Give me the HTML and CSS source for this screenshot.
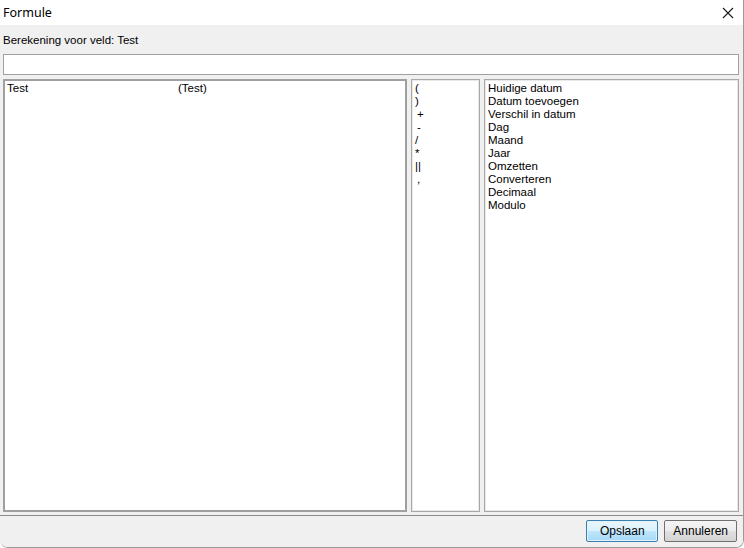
FILE: index.html
```html
<!DOCTYPE html>
<html lang="nl">
<head>
    <meta charset="UTF-8">
    <title>Formule</title>
    <link rel="stylesheet" href="styles.css">
</head>
<body>
    <div class="window">
        <div class="titlebar">
            <span class="title">Formule</span>
            <svg class="close" width="12" height="12" viewBox="0 0 12 12">
                <path d="M1 1 L11 11 M11 1 L1 11" stroke="#1a1a1a" stroke-width="1.1" fill="none"/>
            </svg>
        </div>
        <div class="client">
            <div class="field-label">Berekening voor veld: Test</div>
            <input class="formula-input" type="text">
            <div class="panels">
                <div class="list fields">
                    <div class="field-row"><span class="field-name">Test</span><span>(Test)</span></div>
                </div>
                <div class="list operators">
                    <div>(</div>
                    <div>)</div>
                    <div class="ind">+</div>
                    <div class="ind">-</div>
                    <div>/</div>
                    <div>*</div>
                    <div>||</div>
                    <div class="ind">,</div>
                </div>
                <div class="list functions">
                    <div>Huidige datum</div>
                    <div>Datum toevoegen</div>
                    <div>Verschil in datum</div>
                    <div>Dag</div>
                    <div>Maand</div>
                    <div>Jaar</div>
                    <div>Omzetten</div>
                    <div>Converteren</div>
                    <div>Decimaal</div>
                    <div>Modulo</div>
                </div>
            </div>
            <div class="footer">
                <button class="btn default">Opslaan</button>
                <button class="btn">Annuleren</button>
            </div>
        </div>
    </div>
</body>
</html>
```

FILE: styles.css
```css
html, body {
    margin: 0;
    padding: 0;
    background: #ffffff;
}
.window {
    width: 744px;
    height: 548px;
    box-sizing: border-box;
    border-right: 1px solid #9a9a9a;
    border-bottom: 1px solid #9a9a9a;
    border-radius: 6px 0 8px 8px;
    overflow: hidden;
    display: flex;
    flex-direction: column;
    font-family: "Liberation Sans", Arial, sans-serif;
    font-size: 11.5px;
    color: #000;
}
.titlebar {
    height: 25px;
    background: #ffffff;
    display: flex;
    align-items: center;
    justify-content: space-between;
    padding: 0 9px 0 3px;
    flex-shrink: 0;
}
.title {
    font-family: "Noto Sans", sans-serif;
    font-size: 12.5px;
    color: #000;
}
.close {
    display: block;
}
.client {
    flex: 1;
    background: #f0f0f0;
    display: flex;
    flex-direction: column;
    padding: 0 0 0 3px;
}
.field-label {
    height: 29px;
    line-height: 13px;
    padding-top: 9px;
    box-sizing: border-box;
}
.formula-input {
    width: 736px;
    height: 21px;
    box-sizing: border-box;
    margin: 0;
    border: 1px solid #a0a0a0;
    background: #fff;
    outline: none;
}
.panels {
    display: flex;
    gap: 4px;
    margin-top: 4px;
    height: 433px;
}
.list {
    background: #fff;
    box-sizing: border-box;
    line-height: 13px;
    padding: 2px 3px;
}
.fields {
    width: 404px;
    border: 2px solid #a0a0a0;
    padding: 1px 2px;
}
.field-row {
    display: flex;
}
.field-name {
    width: 171px;
}
.operators {
    width: 69px;
    border: 1px solid #a8a8a8;
    box-shadow: inset 0 0 0 1px #e8e8e8;
}
.operators .ind {
    padding-left: 2px;
}
.functions {
    width: 255px;
    border: 1px solid #a8a8a8;
    box-shadow: inset 0 0 0 1px #e8e8e8;
}
.footer {
    margin-left: -3px;
    margin-top: 3px;
    border-top: 1px solid #8c8c8c;
    display: flex;
    justify-content: flex-end;
    gap: 6px;
    padding: 4px 6px 0 0;
}
.btn {
    height: 22px;
    font-family: "Liberation Sans", Arial, sans-serif;
    font-size: 12px;
    color: #000;
    border: 1px solid #707070;
    border-radius: 2px;
    background: linear-gradient(#f4f4f4, #ececec 50%, #e0e0e0 51%, #d4d4d4);
    padding: 0 8px;
    margin: 0;
}
.btn.default {
    width: 72px;
    border-color: #3c7fb1;
    background: linear-gradient(#eaf6fd, #d9f0fc 50%, #bee6fd 51%, #a7d9f5);
    box-shadow: inset 0 0 0 1px #dff2fc;
}
```
